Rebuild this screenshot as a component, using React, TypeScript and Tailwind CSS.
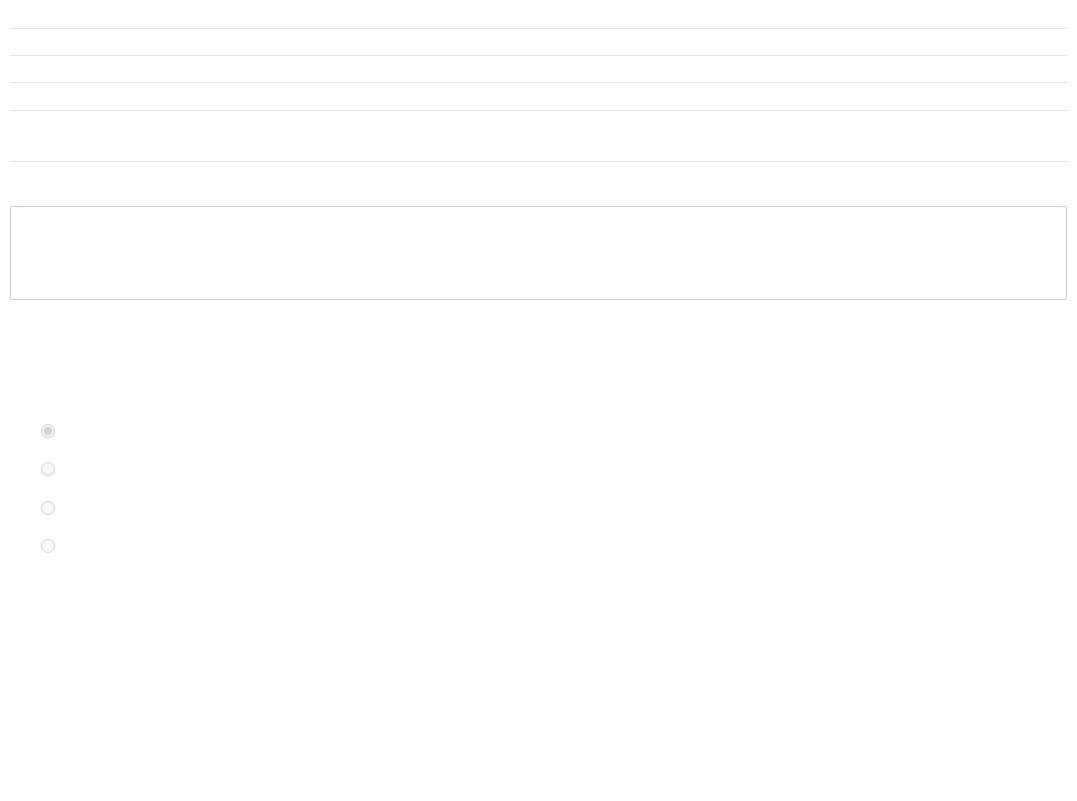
import React from "react";

export default function App() {
  return (
    <div className="w-[1077px] h-[801px] bg-white px-[10px]" style={{ fontFamily: '"Liberation Sans", sans-serif' }}>
      <div className="h-[29px] border-b border-[#e2e2e4]" />
      <div className="h-[27px] border-b border-[#e2e2e4]" />
      <div className="h-[27px] border-b border-[#e2e2e4]" />
      <div className="h-[28px] border-b border-[#e2e2e4]" />
      <div className="h-[51px] border-b border-[#e2e2e4]" />
      <div className="h-[44px]" />
      <div className="h-[94px] border border-[#c9cdd6] rounded-[1px]" />
      <div className="h-[124px]" />
      <div className="flex flex-col pl-[31px]">
        <div className="h-[38px]">
          <input type="radio" name="r" disabled defaultChecked className="block w-[14px] h-[14px] m-0" />
        </div>
        <div className="h-[39px]">
          <input type="radio" name="r" disabled className="block w-[14px] h-[14px] m-0" />
        </div>
        <div className="h-[38px]">
          <input type="radio" name="r" disabled className="block w-[14px] h-[14px] m-0" />
        </div>
        <div className="h-[38px]">
          <input type="radio" name="r" disabled className="block w-[14px] h-[14px] m-0" />
        </div>
      </div>
    </div>
  );
}
